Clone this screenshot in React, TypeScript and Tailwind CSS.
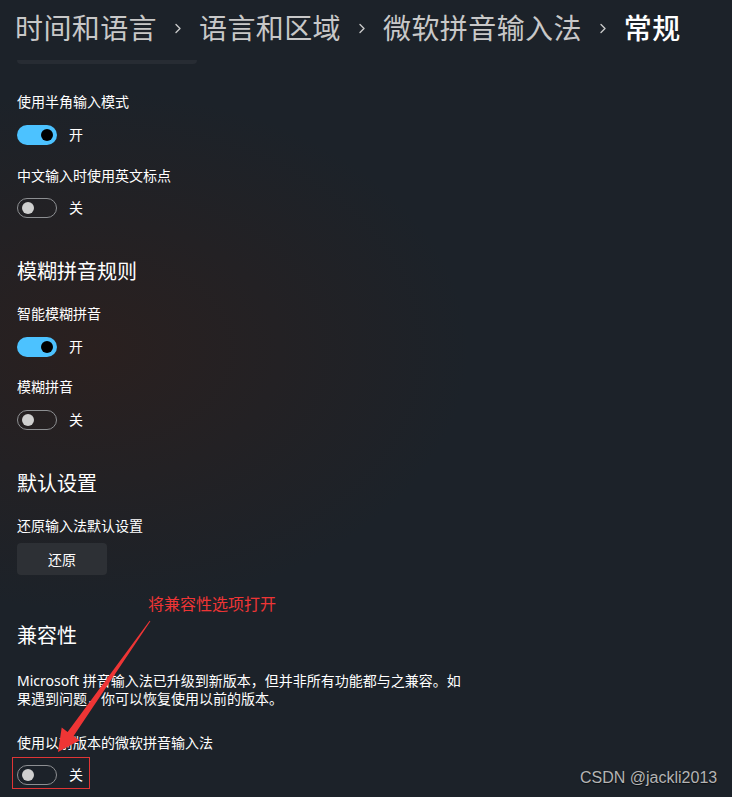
const font = "font-['Segoe_UI','Noto_Sans','Noto_Sans_CJK_SC',sans-serif]";

function Chevron() {
  return (
    <span className="w-[42px] flex justify-center items-center">
      <svg width="8" height="13" viewBox="0 0 8 13" fill="none">
        <path d="M2 2.5 L6 6.5 L2 10.5" stroke="#c8c8c8" strokeWidth="1.4" strokeLinecap="round" strokeLinejoin="round" />
      </svg>
    </span>
  );
}

function Toggle({ on }: { on: boolean }) {
  return (
    <div className="flex items-center gap-[12px]">
      {on ? (
        <div className="w-[40px] h-[20px] rounded-full bg-[#4cc2ff] flex items-center justify-end pr-[4px]">
          <div className="w-[12px] h-[12px] rounded-full bg-black" />
        </div>
      ) : (
        <div className="w-[40px] h-[20px] rounded-full border border-[#8d8f92] flex items-center pl-[4px]">
          <div className="w-[12px] h-[12px] rounded-full bg-[#cfcfcf]" />
        </div>
      )}
      <span className="text-[14px] leading-[20px] text-white">{on ? "开" : "关"}</span>
    </div>
  );
}

function Label({ children, className = "" }: { children: React.ReactNode; className?: string }) {
  return <p className={`text-[14px] leading-[20px] text-white ${className}`}>{children}</p>;
}

function Heading({ children, className = "" }: { children: React.ReactNode; className?: string }) {
  return <h2 className={`text-[20px] leading-[28px] font-normal text-white ${className}`}>{children}</h2>;
}

export default function App() {
  return (
    <div className={`relative w-[732px] h-[797px] overflow-hidden bg-[#1c2229] ${font}`}>
      {/* warm glow on the left */}
      <div className="absolute inset-0 bg-[radial-gradient(ellipse_380px_260px_at_90px_350px,#2a201f_0%,rgba(28,34,41,0)_100%)]" />

      <div className="relative">
        {/* Breadcrumb */}
        <div className="h-[60px] pt-[10px] pl-[15px] flex items-start">
          <div className="flex items-center text-[28px] leading-[36px] tracking-[0.4px]">
            <span className="text-[#c8c8c8]">时间和语言</span>
            <Chevron />
            <span className="text-[#c8c8c8]">语言和区域</span>
            <Chevron />
            <span className="text-[#c8c8c8]">微软拼音输入法</span>
            <Chevron />
            <span className="text-white font-medium">常规</span>
          </div>
        </div>
        <div className="ml-[17px] w-[180px] h-[4px] rounded-b-[4px] bg-[#272c33]" />

        <div className="px-[17px]">
          <Label className="mt-[28px]">使用半角输入模式</Label>
          <div className="mt-[13px]"><Toggle on /></div>
          <Label className="mt-[21px]">中文输入时使用英文标点</Label>
          <div className="mt-[12px]"><Toggle on={false} /></div>

          <Heading className="mt-[40px]">模糊拼音规则</Heading>
          <Label className="mt-[18px]">智能模糊拼音</Label>
          <div className="mt-[13px]"><Toggle on /></div>
          <Label className="mt-[20px]">模糊拼音</Label>
          <div className="mt-[13px]"><Toggle on={false} /></div>

          <Heading className="mt-[40px]">默认设置</Heading>
          <Label className="mt-[18px]">还原输入法默认设置</Label>
          <button className="mt-[7px] w-[90px] h-[32px] rounded-[4px] bg-[#2d3035] text-[14px] text-white flex items-center justify-center">
            还原
          </button>

          <Heading className="mt-[47px]">兼容性</Heading>
          <p className="mt-[22px] w-[452px] text-[14px] leading-[18px] text-white">
            Microsoft 拼音输入法已升级到新版本，但并非所有功能都与之兼容。如果遇到问题，你可以恢复使用以前的版本。
          </p>
          <Label className="mt-[25px]">使用以前版本的微软拼音输入法</Label>
          <div className="mt-[12px]"><Toggle on={false} /></div>
        </div>
      </div>

      {/* annotation overlay */}
      <p className="absolute left-[148px] top-[594px] text-[16px] leading-[20px] text-[#ee3535]">将兼容性选项打开</p>
      <svg className="absolute left-0 top-0" width="732" height="797" viewBox="0 0 732 797">
        <polygon
          points="150.4,621.3 73.6,736 79.5,740.5 58,752 61.7,727.6 67.6,732 149.6,620.7"
          fill="#ee3535"
        />
      </svg>
      <div className="absolute left-[12px] top-[757px] w-[78px] h-[32px] border border-[#e03535]" />

      {/* watermark */}
      <span className="absolute left-[580px] top-[768px] text-[16px] leading-[20px] text-[#b4b4b4] font-['Liberation_Sans',sans-serif] [text-shadow:0_1px_1px_rgba(0,0,0,0.6)]">
        CSDN @jackli2013
      </span>
    </div>
  );
}
